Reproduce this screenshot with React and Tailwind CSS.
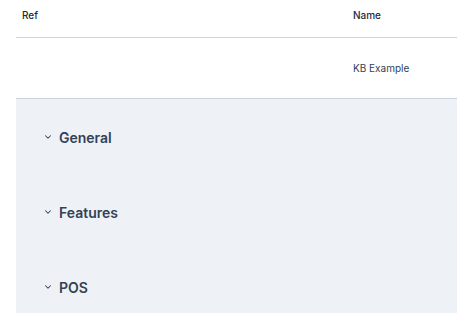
import { ChevronDown } from 'lucide-react';

export default function App() {
  const sections = ['General', 'Features', 'POS'];

  return (
    <div className="h-[313px] overflow-hidden bg-white pl-4 font-['Inter',sans-serif] text-[#1e293b]">
      {/* Table */}
      <div className="grid grid-cols-[331px_1fr] h-[38px] items-start pt-[8px] border-b border-[#cbd5e1] text-[10px] font-medium">
        <div className="pl-[6px]">Ref</div>
        <div className="pl-[6px]">Name</div>
      </div>
      <div className="grid grid-cols-[331px_1fr] h-[61px] items-center pt-[1px] border-b border-[#cbd5e1] text-[10px] text-[#334155]">
        <div className="pl-[6px]"></div>
        <div className="pl-[6px]">KB Example</div>
      </div>

      {/* Sections */}
      <div className="bg-[#eef2f6] h-full pt-[27px]">
        {sections.map((s) => (
          <div key={s} className="h-[75px] flex items-start pl-[28px]">
            <div className="flex items-center gap-[6px] h-[22px]">
              <ChevronDown className="w-[10px] h-[10px] -ml-[1px] text-[#334155]" strokeWidth={2.5} />
              <span className="text-[14px] font-semibold text-[#334155]">{s}</span>
            </div>
          </div>
        ))}
      </div>
    </div>
  );
}
